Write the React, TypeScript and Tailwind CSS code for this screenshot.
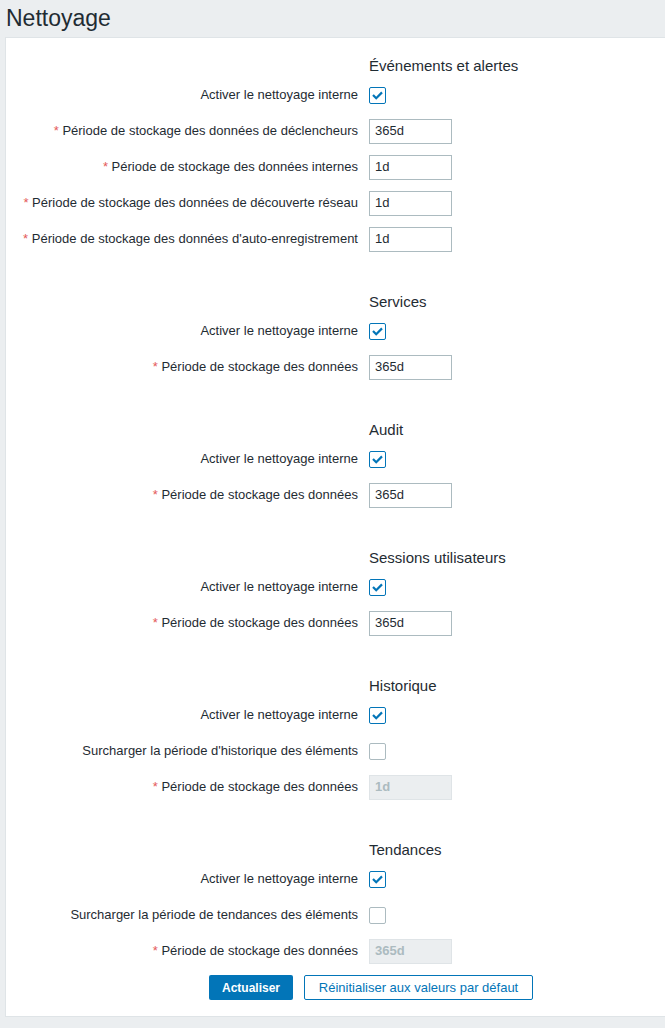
import React from "react";

type Field =
  | { kind: "check"; label: string; checked: boolean; required?: boolean }
  | { kind: "text"; label: string; value: string; required?: boolean; disabled?: boolean };

type Section = { title: string; fields: Field[] };

const STORAGE = "Période de stockage des données";
const ACTIVATE = "Activer le nettoyage interne";

const sections: Section[] = [
  {
    title: "Événements et alertes",
    fields: [
      { kind: "check", label: ACTIVATE, checked: true },
      { kind: "text", label: "Période de stockage des données de déclencheurs", value: "365d", required: true },
      { kind: "text", label: "Période de stockage des données internes", value: "1d", required: true },
      { kind: "text", label: "Période de stockage des données de découverte réseau", value: "1d", required: true },
      { kind: "text", label: "Période de stockage des données d'auto-enregistrement", value: "1d", required: true },
    ],
  },
  {
    title: "Services",
    fields: [
      { kind: "check", label: ACTIVATE, checked: true },
      { kind: "text", label: STORAGE, value: "365d", required: true },
    ],
  },
  {
    title: "Audit",
    fields: [
      { kind: "check", label: ACTIVATE, checked: true },
      { kind: "text", label: STORAGE, value: "365d", required: true },
    ],
  },
  {
    title: "Sessions utilisateurs",
    fields: [
      { kind: "check", label: ACTIVATE, checked: true },
      { kind: "text", label: STORAGE, value: "365d", required: true },
    ],
  },
  {
    title: "Historique",
    fields: [
      { kind: "check", label: ACTIVATE, checked: true },
      { kind: "check", label: "Surcharger la période d'historique des éléments", checked: false },
      { kind: "text", label: STORAGE, value: "1d", required: true, disabled: true },
    ],
  },
  {
    title: "Tendances",
    fields: [
      { kind: "check", label: ACTIVATE, checked: true },
      { kind: "check", label: "Surcharger la période de tendances des éléments", checked: false },
      { kind: "text", label: STORAGE, value: "365d", required: true, disabled: true },
    ],
  },
];

const Checkbox = ({ checked }: { checked: boolean }) => (
  <span
    className={
      checked
        ? "flex h-[17px] w-[17px] items-center justify-center rounded-[2px] border border-[#0275b8] bg-white"
        : "flex h-[17px] w-[17px] items-center justify-center rounded-[2px] border border-[#acbbc0] bg-white"
    }
  >
    {checked && (
      <svg width="13" height="13" viewBox="0 0 13 13" fill="none">
        <path d="M2 6 L5.2 9.2 L11 3.4" stroke="#0275b8" strokeWidth="2.2" />
      </svg>
    )}
  </span>
);

const TextInput = ({ value, disabled }: { value: string; disabled?: boolean }) => (
  <div
    className={
      disabled
        ? "flex h-[25px] w-[83px] items-center border border-[#dfe4e7] bg-[#ebeef0] px-[5px] text-[13px] font-bold text-[#acbbc0]"
        : "flex h-[25px] w-[83px] items-center border border-[#acbbc0] bg-white px-[5px] text-[13px] text-[#1f2c33]"
    }
  >
    {value}
  </div>
);

const FieldRow = ({ field }: { field: Field }) => (
  <div className="grid h-[36px] grid-cols-[352px_1fr] items-center gap-x-[11px]">
    <div className="text-right text-[13px] text-[#1f2c33]">
      {field.required && <span className="text-[#e45959]">* </span>}
      {field.label}
    </div>
    <div>
      {field.kind === "check" ? (
        <Checkbox checked={field.checked} />
      ) : (
        <TextInput value={field.value} disabled={field.disabled} />
      )}
    </div>
  </div>
);

export default function App() {
  return (
    <div
      className="min-h-[1028px] bg-[#ebeef0]"
      style={{ fontFamily: '"Liberation Sans", Arial, sans-serif' }}
    >
      <div className="flex h-[37px] items-center pl-[6px] text-[23px] leading-[37px] text-[#1f2c33]">
        Nettoyage
      </div>
      <div className="ml-[5px] border border-r-0 border-[#dfe4e7] bg-white pb-[16px] pt-[17px]">
        {sections.map((s, i) => (
          <div key={s.title} className={i > 0 ? "mt-[34px]" : ""}>
            <div className="grid h-[22px] grid-cols-[352px_1fr] items-center gap-x-[11px]">
              <div />
              <div className="text-[15px] text-[#1f2c33]">{s.title}</div>
            </div>
            {s.fields.map((f, j) => (
              <FieldRow key={j} field={f} />
            ))}
          </div>
        ))}
        <div className="mt-[6px] flex gap-[11px] pl-[203px]">
          <button className="h-[25px] w-[84px] rounded-[2px] bg-[#0275b8] text-[12px] font-bold text-white">
            Actualiser
          </button>
          <button className="h-[25px] w-[229px] rounded-[2px] border border-[#0275b8] bg-white text-[13px] text-[#0275b8]">
            Réinitialiser aux valeurs par défaut
          </button>
        </div>
      </div>
    </div>
  );
}
